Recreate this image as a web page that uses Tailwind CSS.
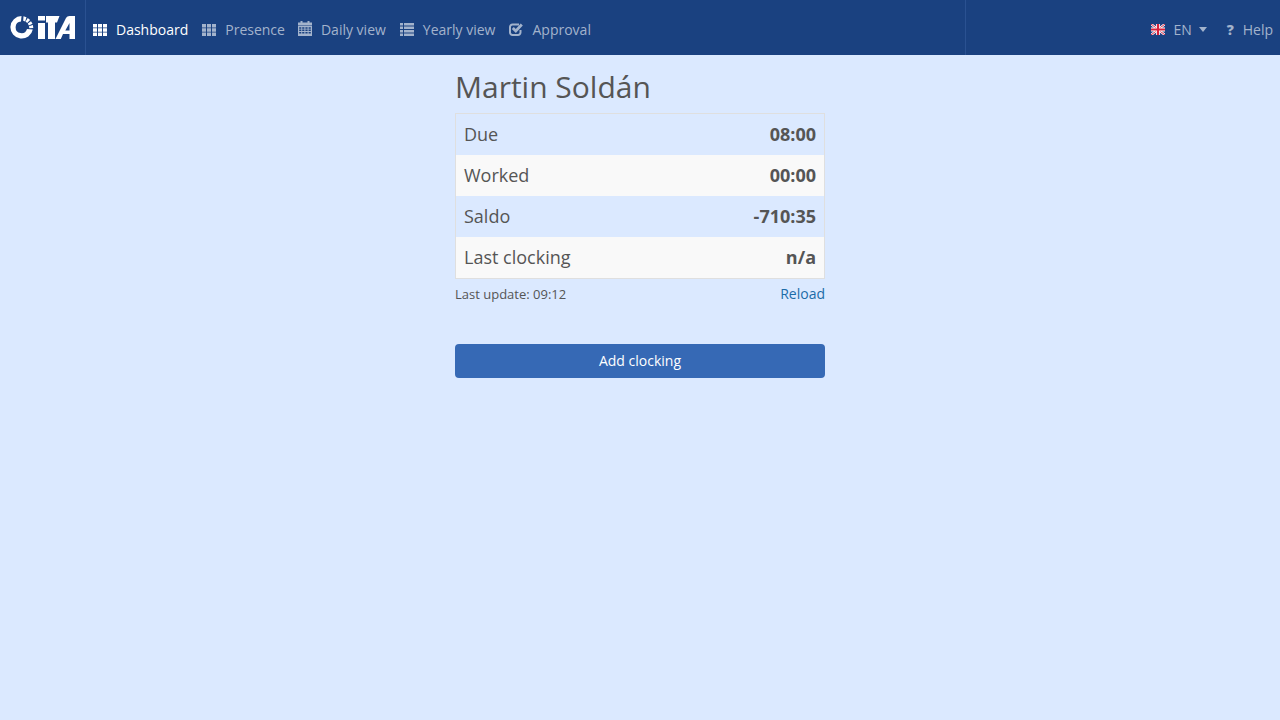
<!DOCTYPE html>
<html lang="en">
<head>
<meta charset="utf-8">
<title>Dashboard</title>
<script src="https://cdn.jsdelivr.net/npm/@tailwindcss/browser@4"></script>
</head>
<body class="bg-[#dbe9ff] min-h-[720px] font-['Open_Sans',sans-serif] text-[#555555]">
<nav class="h-[55px] bg-[#1a4180] flex text-[14px] text-[#a3b3cc]">
  <div class="w-[86px] border-r border-[#2a5191] flex items-center pl-[10px] pb-[1px]">
    <svg width="66" height="23" viewBox="0 0 66 23" fill="#fff">
      <path d="M11.500 0A11.300 11.300 0 1 0 22.800 13.500L17 13A5.800 5.800 0 1 1 11 5.600z"/>
      <path d="M13.500.3l3 .9-1.300 4.300-2-.7zM17.800 2l2.300 2-3 3-1.500-1.400zM21 5.300l1.500 2.500-3.700 1.600-1-1.800zM22.900 9l.4 3-4 .2-.3-2z"/>
      <rect x="28" y="0" width="7" height="4.500"/>
      <rect x="28" y="7" width="7" height="16"/>
      <path d="M36 0h13.500l-2.500 6.500h-2V23h-7V6.500h-2z"/>
      <path fill-rule="evenodd" d="M45.500 23L56 2c.8-1.300 2-2 3.500-2H65v23h-5.500v-5h-6.500l-2.200 5zM59.500 7l-4.200 7.500h4.200z"/>
    </svg>
  </div>
  <div class="flex-1 flex items-center pl-[7px] pt-[4px] gap-[14px] border-r border-[#2a5191]">
    <a class="flex items-center gap-[9px] text-white">
      <svg width="14" height="12" viewBox="0 0 14 12" fill="currentColor"><path d="M0 0h4v3.400H0zM5 0h4v3.400H5zM10 0h4v3.400h-4zM0 4.300h4v3.400H0zM5 4.300h4v3.400H5zM10 4.300h4v3.400h-4zM0 8.600h4V12H0zM5 8.600h4V12H5zM10 8.600h4V12h-4z"/></svg>
      <span>Dashboard</span>
    </a>
    <a class="flex items-center gap-[9px] mr-[-1px]">
      <svg width="14" height="12" viewBox="0 0 14 12" fill="currentColor"><path d="M0 0h4v3.400H0zM5 0h4v3.400H5zM10 0h4v3.400h-4zM0 4.300h4v3.400H0zM5 4.300h4v3.400H5zM10 4.300h4v3.400h-4zM0 8.600h4V12H0zM5 8.600h4V12H5zM10 8.600h4V12h-4z"/></svg>
      <span>Presence</span>
    </a>
    <a class="flex items-center gap-[9px]">
      <svg width="14" height="15" viewBox="0 0 14 15" fill="currentColor" class="mt-[-2px]"><path d="M2.500 0h2v2h-2zM9.500 0h2v2h-2zM0 1.500h14v3H0z"/><path fill-rule="evenodd" d="M0 5h14v10H0zM1.200 6.200v1.500h2.100V6.200zM4.200 6.200v1.500h2.200V6.200zM7.400 6.200v1.500h2.200V6.200zM10.600 6.200v1.500h2.200V6.200zM1.200 8.600v1.500h2.100V8.600zM4.200 8.600v1.500h2.200V8.600zM7.400 8.600v1.500h2.200V8.600zM10.600 8.600v1.500h2.200V8.600zM1.200 11v1.500h2.100V11zM4.200 11v1.500h2.200V11zM7.400 11v1.500h2.200V11zM10.600 11v1.500h2.200V11z"/></svg>
      <span>Daily view</span>
    </a>
    <a class="flex items-center gap-[9px]">
      <svg width="14" height="13" viewBox="0 0 14 13" fill="currentColor"><path d="M0 0h3v2.500H0zM4 0h10v2.500H4zM0 3.500h3V6H0zM4 3.500h10V6H4zM0 7h3v2.500H0zM4 7h10v2.500H4zM0 10.500h3V13H0zM4 10.500h10V13H4z"/></svg>
      <span>Yearly view</span>
    </a>
    <a class="flex items-center gap-[9px]">
      <svg width="14" height="14" viewBox="0 0 14 14" fill="none" stroke="currentColor" class="mt-[-1px]"><path stroke-width="2" d="M11.500 8v2.500A2.500 2.500 0 0 1 9 13H3.500A2.500 2.500 0 0 1 1 10.500V5a2.500 2.500 0 0 1 2.500-2.500H10"/><path stroke-width="2.800" d="M3.800 6l3 3 6-6.500"/></svg>
      <span>Approval</span>
    </a>
  </div>
  <div class="w-[314px] flex items-center justify-end pr-[7px] pt-[4px] gap-[19px]">
    <a class="flex items-center">
      <svg width="14" height="11" viewBox="0 0 14 11" class="mr-[8px]"><rect width="14" height="11" fill="#2b3f80"/><path d="M0 0l14 11M14 0L0 11" stroke="#fff" stroke-width="2.400"/><path d="M0 0l14 11M14 0L0 11" stroke="#d8203a" stroke-width="1"/><path d="M7 0v11M0 5.500h14" stroke="#fff" stroke-width="3.800"/><path d="M7 0v11M0 5.500h14" stroke="#d8203a" stroke-width="2.200"/></svg>
      <span>EN</span>
      <span class="ml-[7px] w-0 h-0 border-x-[4.500px] border-x-transparent border-t-[5px] border-t-current"></span>
    </a>
    <a class="flex items-center gap-[8px]">
      <span class="font-extrabold text-[14px] leading-none w-[9px] text-center">?</span>
      <span>Help</span>
    </a>
  </div>
</nav>
<main class="w-[370px] mx-auto">
  <h1 class="text-[30px] leading-[33px] pt-[15px] mb-[10px] font-normal">Martin Soldán</h1>
  <div class="border border-[#dfdfdf] text-[18px]">
    <div class="h-[41px] flex items-center justify-between px-2 bg-[#dbe9ff]"><span>Due</span><b>08:00</b></div>
    <div class="h-[41px] flex items-center justify-between px-2 bg-[#f9f9f9]"><span>Worked</span><b>00:00</b></div>
    <div class="h-[41px] flex items-center justify-between px-2 bg-[#dbe9ff]"><span>Saldo</span><b>-710:35</b></div>
    <div class="h-[41px] flex items-center justify-between px-2 bg-[#f9f9f9]"><span>Last clocking</span><b>n/a</b></div>
  </div>
  <div class="flex justify-between mt-[5px] h-[20px]">
    <span class="text-[13px] leading-[20px]">Last update: 09:12</span>
    <a class="text-[14px] leading-[20px] text-[#1b6ca8]">Reload</a>
  </div>
  <button class="mt-[40px] w-full h-[34px] pb-[2px] rounded bg-[#3669b5] text-white text-[14px]">Add clocking</button>
</main>
</body>
</html>
